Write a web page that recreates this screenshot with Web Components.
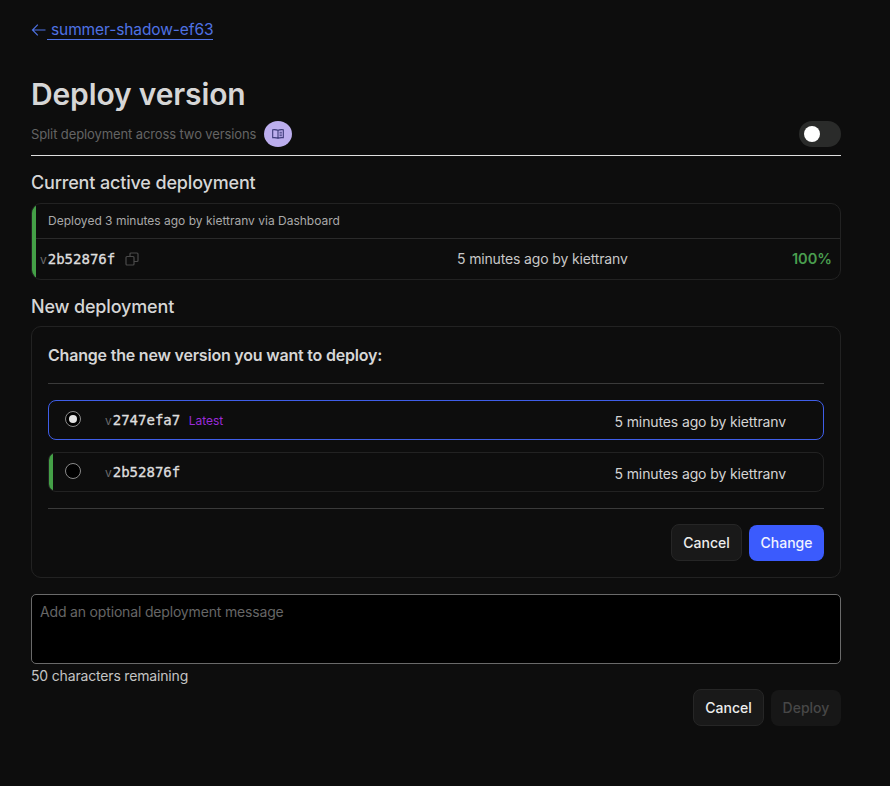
<!doctype html>
<html><head><meta charset="utf-8"><style>
html,body{margin:0;padding:0;background:#0d0d0d;height:786px;overflow:hidden}
body{font-family:Inter,"Liberation Sans",sans-serif;color:#dcdcdc}
</style></head><body>
<deploy-page></deploy-page>
<script>
function def(name,css,html){
  customElements.define(name,class extends HTMLElement{
    constructor(){super();const r=this.attachShadow({mode:'open'});
      r.innerHTML='<style>'+css+'</style>'+(typeof html==='function'?html(this):html);}
  });
}
def('ui-button',`:host{display:inline-flex;align-items:center;justify-content:center;box-sizing:border-box;height:37px;width:71px;border-radius:8px;font-size:14px;font-weight:450;background:#191919;border:1px solid #262626;color:#ededed}
:host([variant=primary]){background:#3b5bfd;border:0;height:36px;width:75px;color:#f0f2ff}
:host([variant=disabled]){background:#171717;border:0;height:36px;width:70px;color:#474747}`,'<slot></slot>');
def('version-id',`:host{display:inline-flex;align-items:baseline;gap:1px}
.v{font-size:12px;color:#6b6b6b;font-family:Inter,sans-serif}
.id{font:400 14px "DejaVu Sans Mono",monospace;-webkit-text-stroke:.35px #dedede;color:#dedede}`,'<span class="v">v</span><span class="id"><slot></slot></span>');
def('radio-dot',`:host{display:block;box-sizing:border-box;width:16px;height:16px;border-radius:50%;border:1px solid #8a8a8a;background:#000;position:relative;margin-top:-2px}
:host([checked])::after{content:"";position:absolute;left:3px;top:3px;width:8px;height:8px;border-radius:50%;background:#e4e4e4}`,'');
def('version-row',`:host{display:flex;align-items:center;box-sizing:border-box;height:40px;border:1px solid #222;border-radius:8px;padding:0 37px 0 16px;font-size:14px;letter-spacing:-.12px;color:#d4d4d4;position:relative;overflow:hidden}
:host([selected]){border-color:#3f5ee8}
:host([active])::before{content:"";position:absolute;left:-1px;top:-1px;bottom:-1px;width:5px;background:#44a047}
.ver{margin-left:24px;display:flex;align-items:baseline;gap:8.5px;flex:1;margin-top:1px;letter-spacing:0}
.meta{margin-top:3px}
::slotted([slot=tag]){font-size:12px;color:#9a2bd8}`,
`<slot name="radio"></slot><div class="ver"><slot name="ver"></slot><slot name="tag"></slot></div><span class="meta"><slot name="meta"></slot></span>`);
def('active-card',`:host{display:block;box-sizing:border-box;height:77px;border:1px solid #222;border-radius:10px;position:relative;overflow:hidden}
.bar{position:absolute;left:-1px;top:-1px;bottom:-1px;width:5px;background:#44a047}
.top{box-sizing:border-box;height:35px;padding:0 0 0 16px;display:flex;align-items:center;font-size:12px;color:#a9a9a9;border-bottom:1px solid #2a2a2a}
.bot{height:40px;display:grid;grid-template-columns:417px auto 1fr;align-items:center;padding:0 8px 0 8px;font-size:14px;letter-spacing:-.15px;color:#c8c8c8}
.l{display:flex;align-items:center;gap:10px;letter-spacing:0}
.r{text-align:right;color:#4a9e4f;font-weight:600;font-size:14.6px;letter-spacing:0}
svg{display:block}`,
`<div class="bar"></div><div class="top">Deployed 3 minutes ago by kiettranv via Dashboard</div>
<div class="bot"><div class="l"><version-id>2b52876f</version-id>
<svg width="14" height="14" viewBox="0 0 14 14" fill="none" stroke="#4a4a4a" stroke-width="1.2"><rect x="1" y="4.5" width="8" height="8.5" rx="1"/><path d="M5 4.5V2a1 1 0 0 1 1-1h6a1 1 0 0 1 1 1v6.5a1 1 0 0 1-1 1H9"/></svg></div>
<div>5 minutes ago by kiettranv</div><div class="r">100%</div></div>`);
def('change-card',`:host{display:block;box-sizing:border-box;height:252px;border:1px solid #222;border-radius:10px;padding:0 16px}
.t{height:57px;display:flex;align-items:center;font-size:16px;font-weight:600;letter-spacing:-.2px;color:#d6d6d6;border-bottom:1px solid #3a3a3a;box-sizing:border-box}
.list{display:flex;flex-direction:column;gap:12px;padding:16px 0;border-bottom:1px solid #3a3a3a}
.btns{display:flex;justify-content:flex-end;gap:7px;padding-top:15px;align-items:flex-end}`,
`<div class="t">Change the new version you want to deploy:</div>
<div class="list"><slot></slot></div>
<div class="btns"><ui-button>Cancel</ui-button><ui-button variant="primary">Change</ui-button></div>`);
def('message-box',`:host{display:block;box-sizing:border-box;height:70px;background:#000;border:1px solid #6a6a6a;border-radius:5px;padding:8px;font-size:14px;letter-spacing:-.17px;color:#666;line-height:17px}`,'<slot></slot>');
def('toggle-switch',`:host{display:block;box-sizing:border-box;width:42px;height:26px;border-radius:13px;background:#2a2b2a;position:relative}
:host::after{content:"";position:absolute;left:5px;top:5px;width:16px;height:16px;border-radius:50%;background:#fff}`,'');
def('book-badge',`:host{display:flex;align-items:center;justify-content:center;width:28px;height:26px;border-radius:50%;background:#bcaeee}`,
`<svg width="12" height="10" viewBox="0 0 12 10" fill="none" stroke="#3c3a78" stroke-width="1.1"><path d="M6 1.2C5 .7 3 .6.7.7v8c2.3-.1 4.3 0 5.3.6 1-.6 3-.7 5.3-.6v-8C9 .6 7 .7 6 1.2zM6 1.2v8"/><path d="M7.5 3.3h2.4M7.5 5h2.4M7.5 6.7h2.4" stroke-width=".9"/></svg>`);
def('deploy-page',`:host{display:block;box-sizing:border-box;width:890px;height:786px;padding:19px 49px 0 31px}
a{display:inline-flex;align-items:center;gap:4px;color:#4f72e3;text-decoration:none;font-size:15.5px;letter-spacing:-.1px;position:relative;height:21px}
a span{border-bottom:1px solid #4f72e3;padding-left:4px;margin-left:-4px;line-height:18px;padding-top:3px;margin-top:-1px}
h1{margin:33px 0 0;font-size:30px;letter-spacing:-.15px;line-height:40px;font-weight:600;color:#d6d6d6}
.sub{display:flex;align-items:center;height:26px;margin-top:7px;font-size:13px;letter-spacing:-.11px;color:#646464;gap:8px}
.sub toggle-switch{margin-left:auto}
hr{border:0;height:1px;background:#dedede;margin:8px 0 0}
h2{margin:0;font-size:18px;letter-spacing:-.16px;line-height:22px;font-weight:500;color:#d6d6d6}
.h1{margin-top:16px;margin-bottom:9px}
.h2{margin-top:16px;margin-bottom:8px}
.m{margin-top:16px}
.c{font-size:14px;letter-spacing:-.17px;color:#c4c4c4;line-height:17px;margin-top:3px}
.b{display:flex;justify-content:flex-end;gap:7px;margin-top:5px;align-items:flex-end}`,
`<a href="#"><svg width="16" height="14" viewBox="0 0 16 14" fill="none" stroke="#4f72e3" stroke-width="1.2"><path d="M14.5 7H1.5M6.8 1.7 1.5 7l5.3 5.3"/></svg><span>summer-shadow-ef63</span></a>
<h1>Deploy version</h1>
<div class="sub"><span>Split deployment across two versions</span><book-badge></book-badge><toggle-switch></toggle-switch></div>
<hr>
<h2 class="h1">Current active deployment</h2>
<active-card></active-card>
<h2 class="h2">New deployment</h2>
<change-card>
<version-row selected><radio-dot slot="radio" checked></radio-dot><version-id slot="ver">2747efa7</version-id><span slot="tag">Latest</span><span slot="meta">5 minutes ago by kiettranv</span></version-row>
<version-row active><radio-dot slot="radio"></radio-dot><version-id slot="ver">2b52876f</version-id><span slot="meta">5 minutes ago by kiettranv</span></version-row>
</change-card>
<message-box class="m">Add an optional deployment message</message-box>
<div class="c">50 characters remaining</div>
<div class="b"><ui-button>Cancel</ui-button><ui-button variant="disabled">Deploy</ui-button></div>`);
</script>
</body></html>
